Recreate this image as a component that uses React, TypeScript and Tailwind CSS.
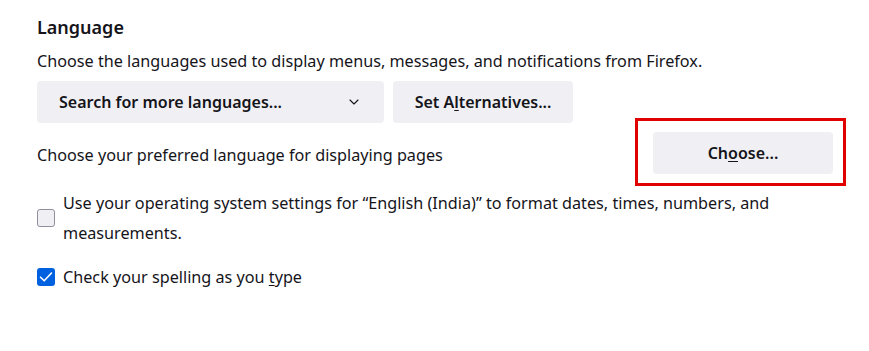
import React from "react";

function Chevron() {
  return (
    <svg width="10" height="6" viewBox="0 0 10 6" fill="none" className="shrink-0">
      <path d="M1 1 L5 5 L9 1" stroke="#15141a" strokeWidth="1.1" strokeLinecap="round" strokeLinejoin="round" />
    </svg>
  );
}

export default function App() {
  return (
    <div
      className="w-[869px] h-[351px] bg-white text-[#15141a] pl-[37px] pr-[36px] overflow-hidden"
      style={{ fontFamily: '"Noto Sans", "Open Sans", sans-serif' }}
    >
      <div className="pt-[15px] h-[38px] text-[18px] leading-[24px] font-semibold">Language</div>
      <div className="mt-[11px] text-[16.2px] leading-[24px]">
        Choose the languages used to display menus, messages, and notifications from Firefox.
      </div>
      <div className="mt-[8px] flex gap-[9px]">
        <div className="w-[347px] h-[42px] rounded-[4px] bg-[#f0f0f4] flex items-center justify-between pl-[22px] pr-[25px] text-[16px] font-semibold">
          <span>Search for more languages...</span>
          <Chevron />
        </div>
        <div className="w-[180px] h-[42px] rounded-[4px] bg-[#f0f0f4] flex items-center justify-center text-[16px] font-semibold">
          <span>
            Set A<span className="underline underline-offset-2">l</span>ternatives...
          </span>
        </div>
      </div>
      <div className="mt-[9px] flex items-center justify-between">
        <span className="text-[16.2px] leading-[24px] mt-[3px]">Choose your preferred language for displaying pages</span>
        <div className="relative">
          <div className="w-[180px] h-[42px] rounded-[4px] bg-[#f0f0f4] flex items-center justify-center text-[16px] font-semibold">
            <span>
              Ch<span className="underline underline-offset-2">o</span>ose...
            </span>
          </div>
          <div className="absolute left-[-18px] right-[-13px] top-[-14px] bottom-[-12px] border-[3px] border-[#e00000] pointer-events-none" />
        </div>
      </div>
      <div className="mt-[14px] flex items-center gap-[8px]">
        <div className="w-[18px] h-[18px] rounded-[3px] border border-[#8f8f9d] bg-[#f0f0f4] shrink-0" />
        <div className="text-[16.2px] leading-[30px]">
          Use your operating system settings for “English (India)” to format dates, times, numbers, and
          <br />
          measurements.
        </div>
      </div>
      <div className="mt-[14px] flex items-center gap-[8px]">
        <div className="w-[18px] h-[18px] rounded-[3px] bg-[#0061e0] shrink-0 flex items-center justify-center">
          <svg width="14" height="12" viewBox="0 0 14 12" fill="none">
            <path d="M1.5 6.2 L5.2 9.8 L12.5 2" stroke="white" strokeWidth="1.6" strokeLinecap="round" strokeLinejoin="round" />
          </svg>
        </div>
        <div className="text-[16.2px] leading-[30px]">
          Check your spelling as you <span className="underline underline-offset-2">t</span>ype
        </div>
      </div>
    </div>
  );
}
